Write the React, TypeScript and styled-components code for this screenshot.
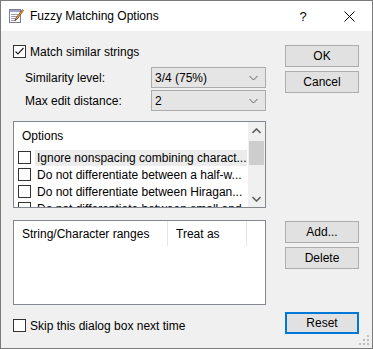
import React from 'react';
import styled, { createGlobalStyle } from 'styled-components';

const GlobalStyle = createGlobalStyle`
  html, body {
    margin: 0;
    padding: 0;
    background: #f0f0f0;
  }
  body {
    font-family: "Liberation Sans", Arial, sans-serif;
    font-size: 12px;
    color: #000;
  }
`;

const Window = styled.div`
  position: relative;
  width: 373px;
  height: 349px;
  box-sizing: border-box;
  border: 1px solid #7a7a7a;
  background: #f0f0f0;
  display: flex;
  flex-direction: column;
`;

const TitleBar = styled.div`
  height: 30px;
  background: #fff;
  display: flex;
  align-items: center;
  padding-left: 7px;
`;

const TitleText = styled.span`
  margin-left: 6px;
  font-size: 12px;
`;

const CaptionButtons = styled.div`
  margin-left: auto;
  display: flex;
  height: 100%;
`;

const CaptionButton = styled.div`
  width: 46px;
  height: 100%;
  display: flex;
  align-items: center;
  justify-content: center;
  font-size: 13px;
`;

const Body = styled.div`
  flex: 1;
  display: flex;
  padding: 14px 0 0 12px;
  gap: 19px;
`;

const LeftColumn = styled.div`
  width: 253px;
  display: flex;
  flex-direction: column;
`;

const RightColumn = styled.div`
  width: 74px;
  display: flex;
  flex-direction: column;
`;

const CheckRow = styled.label<{ $top?: number }>`
  display: flex;
  align-items: center;
  height: 13px;
  gap: 4px;
  margin-top: ${p => p.$top ?? 0}px;
  white-space: nowrap;
`;

const Box = styled.span`
  width: 13px;
  height: 13px;
  box-sizing: border-box;
  border: 1px solid #333;
  background: #fff;
  display: flex;
  align-items: center;
  justify-content: center;
  flex-shrink: 0;
`;

const FieldRow = styled.div<{ $top: number }>`
  display: flex;
  align-items: center;
  height: 21px;
  margin-top: ${p => p.$top}px;
`;

const FieldLabel = styled.span`
  width: 126px;
  padding-left: 12px;
`;

const Select = styled.div`
  width: 115px;
  height: 21px;
  box-sizing: border-box;
  border: 1px solid #acacac;
  background: #e5e5e5;
  display: flex;
  align-items: center;
  padding: 0 7px 0 3px;
  justify-content: space-between;
`;

const ListBox = styled.div<{ $top: number; $height: number }>`
  margin-top: ${p => p.$top}px;
  height: ${p => p.$height}px;
  box-sizing: border-box;
  border: 1px solid #828790;
  background: #fff;
  display: flex;
  overflow: hidden;
`;

const ListContent = styled.div`
  flex: 1;
  min-width: 0;
  overflow: hidden;
`;

const ListHeader = styled.div`
  height: 27px;
  display: flex;
  align-items: center;
  padding-left: 8px;
`;

const OptionRow = styled.div`
  height: 17px;
  display: flex;
  align-items: center;
  padding-left: 4px;
`;

const OptionText = styled.span<{ $selected?: boolean }>`
  flex: 1;
  min-width: 0;
  height: 16px;
  line-height: 16px;
  margin: 0 1px 0 4px;
  padding-left: 2px;
  white-space: nowrap;
  overflow: hidden;
  background: ${p => (p.$selected ? '#ececec' : 'transparent')};
`;

const ScrollBar = styled.div`
  width: 17px;
  background: #f0f0f0;
  display: flex;
  flex-direction: column;
`;

const ScrollArrow = styled.div`
  height: 17px;
  display: flex;
  align-items: center;
  justify-content: center;
`;

const ScrollTrack = styled.div`
  flex: 1;
  padding: 2px 1px 0;
`;

const ScrollThumb = styled.div`
  height: 24px;
  background: #cdcdcd;
`;

const ColumnHeaderRow = styled.div`
  height: 25px;
  display: flex;
`;

const ColumnHeader = styled.div<{ $width: number }>`
  width: ${p => p.$width}px;
  box-sizing: border-box;
  padding-left: 8px;
  display: flex;
  align-items: center;
  border-right: 1px solid #e5e5e5;
  white-space: nowrap;
`;

const Button = styled.div<{ $top: number; $default?: boolean }>`
  margin-top: ${p => p.$top}px;
  height: 22px;
  box-sizing: border-box;
  border: ${p => (p.$default ? '2px solid #0078d7' : '1px solid #adadad')};
  background: #e1e1e1;
  display: flex;
  align-items: center;
  justify-content: center;
`;

const Grip = styled.svg`
  position: absolute;
  right: 2px;
  bottom: 2px;
`;

const TitleIcon = () => (
  <svg width="16" height="16" viewBox="0 0 16 16">
    <rect x="1.5" y="1.5" width="11" height="13" fill="#fff" stroke="#7d7d9a" />
    <rect x="2" y="2" width="10" height="2" fill="#9fa3c8" />
    <path d="M3 6.5h7M3 8.5h7M3 10.5h6M3 12.5h5" stroke="#9a9ab8" />
    <path d="M14.5 1.5 L8 10 L7 12.5 L9.3 11 L15.5 2.5 Z" fill="#e5a23a" stroke="#7a4a1a" strokeWidth="0.8" />
    <path d="M7 12.5 L7.6 11 L8.6 11.6 Z" fill="#333" />
  </svg>
);

const CloseGlyph = () => (
  <svg width="11" height="11" viewBox="0 0 11 11">
    <path d="M0.5 0.5 L10.5 10.5 M10.5 0.5 L0.5 10.5" stroke="#000" strokeWidth="1" />
  </svg>
);

const Check = () => (
  <svg width="11" height="11" viewBox="0 0 11 11">
    <path d="M1.5 5.5 L4 8 L9.5 2" stroke="#222" strokeWidth="1.2" fill="none" />
  </svg>
);

const Chevron = ({ up = false, color = '#606060', bold = false }: { up?: boolean; color?: string; bold?: boolean }) => (
  <svg width="9" height="6" viewBox="0 0 9 6">
    <path
      d={up ? 'M0.5 5 L4.5 1 L8.5 5' : 'M0.5 1 L4.5 5 L8.5 1'}
      stroke={color}
      strokeWidth={bold ? 1.6 : 1}
      fill="none"
    />
  </svg>
);

const options = [
  'Ignore nonspacing combining charact...',
  'Do not differentiate between a half-w...',
  'Do not differentiate between Hiragan...',
  'Do not differentiate between small and...',
];

const App = () => {
  return (
    <>
      <GlobalStyle />
      <Window>
        <TitleBar>
          <TitleIcon />
          <TitleText>Fuzzy Matching Options</TitleText>
          <CaptionButtons>
            <CaptionButton>?</CaptionButton>
            <CaptionButton>
              <CloseGlyph />
            </CaptionButton>
          </CaptionButtons>
        </TitleBar>
        <Body>
          <LeftColumn>
            <CheckRow>
              <Box>
                <Check />
              </Box>
              Match similar strings
            </CheckRow>
            <FieldRow $top={9}>
              <FieldLabel>Similarity level:</FieldLabel>
              <Select>
                <span>3/4 (75%)</span>
                <Chevron />
              </Select>
            </FieldRow>
            <FieldRow $top={2}>
              <FieldLabel>Max edit distance:</FieldLabel>
              <Select>
                <span>2</span>
                <Chevron />
              </Select>
            </FieldRow>
            <ListBox $top={10} $height={87}>
              <ListContent>
                <ListHeader>Options</ListHeader>
                {options.map((text, i) => (
                  <OptionRow key={i}>
                    <Box />
                    <OptionText $selected={i === 0}>{text}</OptionText>
                  </OptionRow>
                ))}
              </ListContent>
              <ScrollBar>
                <ScrollArrow>
                  <Chevron up bold />
                </ScrollArrow>
                <ScrollTrack>
                  <ScrollThumb />
                </ScrollTrack>
                <ScrollArrow>
                  <Chevron bold />
                </ScrollArrow>
              </ScrollBar>
            </ListBox>
            <ListBox $top={12} $height={85}>
              <ListContent>
                <ColumnHeaderRow>
                  <ColumnHeader $width={154}>String/Character ranges</ColumnHeader>
                  <ColumnHeader $width={79}>Treat as</ColumnHeader>
                </ColumnHeaderRow>
              </ListContent>
            </ListBox>
            <CheckRow $top={14}>
              <Box />
              Skip this dialog box next time
            </CheckRow>
          </LeftColumn>
          <RightColumn>
            <Button $top={0}>OK</Button>
            <Button $top={4}>Cancel</Button>
            <Button $top={128}>Add...</Button>
            <Button $top={4}>Delete</Button>
            <Button $top={43} $default>
              Reset
            </Button>
          </RightColumn>
        </Body>
        <Grip width="11" height="11" viewBox="0 0 11 11">
          {[
            [8, 0],
            [4, 4],
            [8, 4],
            [0, 8],
            [4, 8],
            [8, 8],
          ].map(([x, y], i) => (
            <rect key={i} x={x} y={y} width="2" height="2" fill="#bdbdbd" />
          ))}
        </Grip>
      </Window>
    </>
  );
};

export default App;
